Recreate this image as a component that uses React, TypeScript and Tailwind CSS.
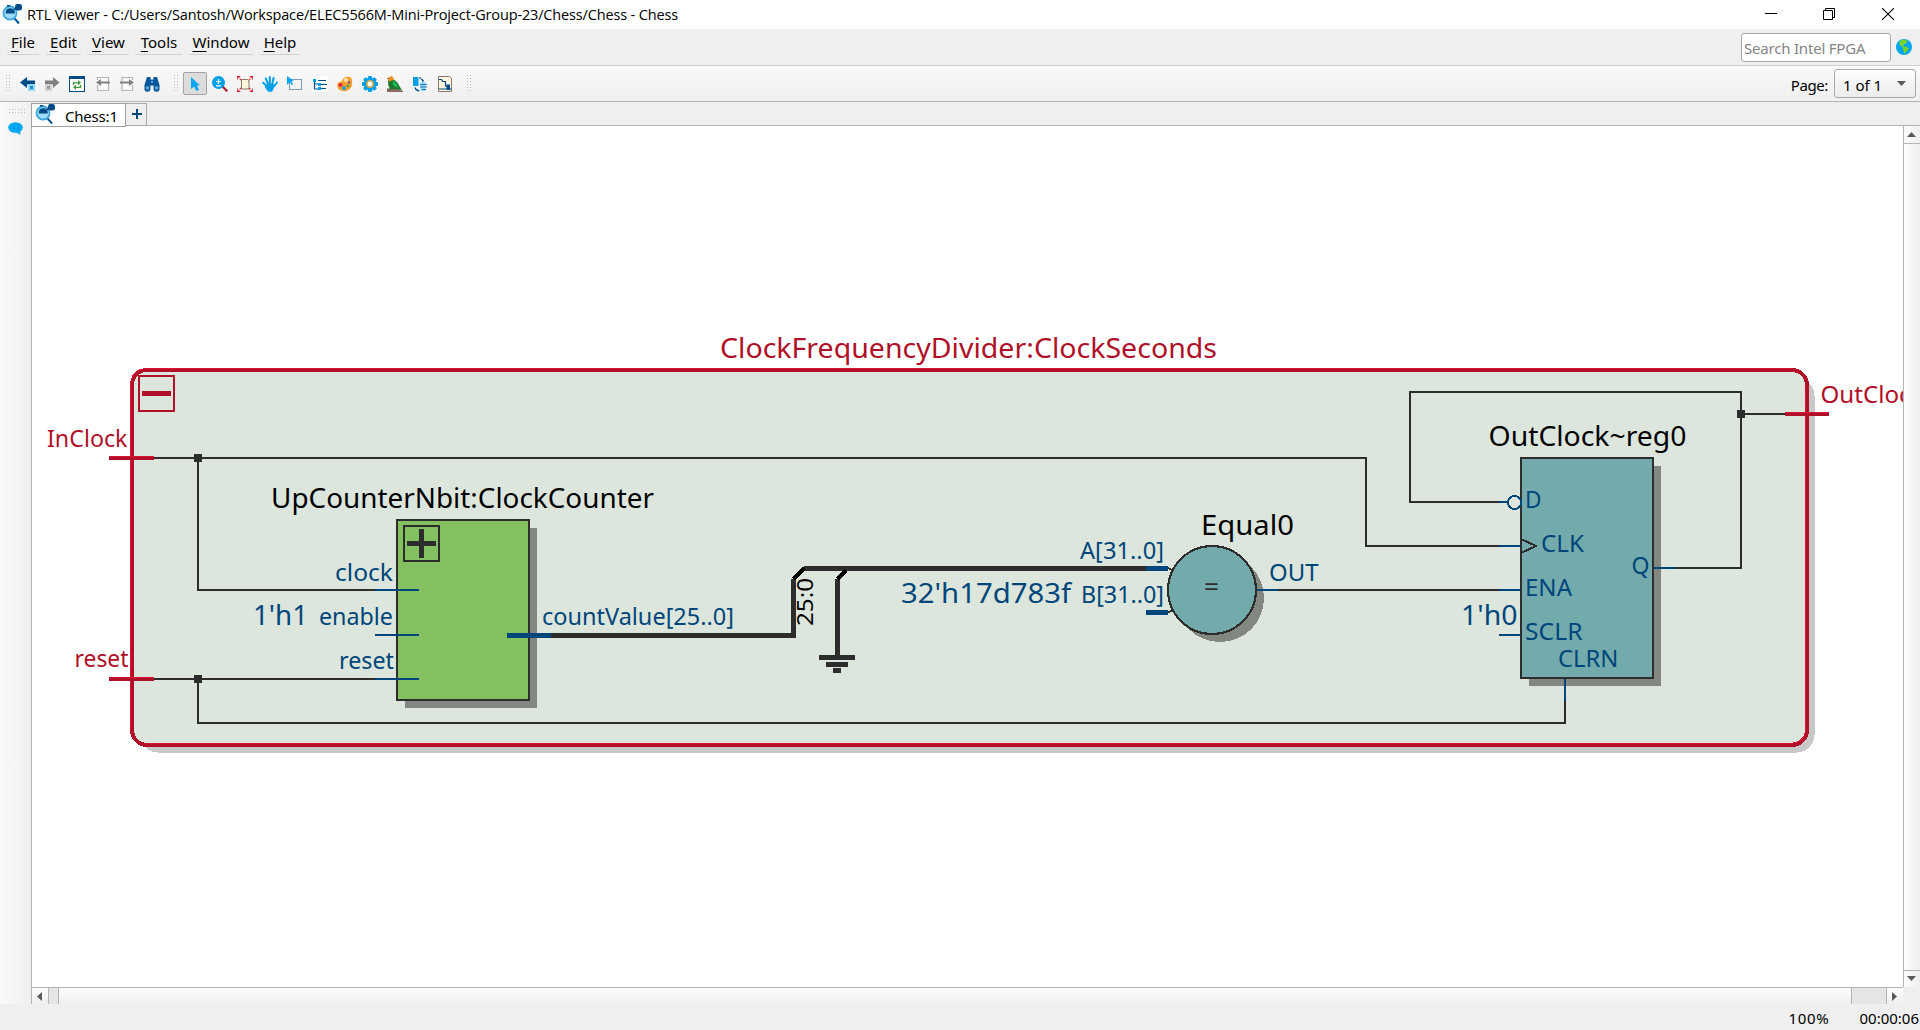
import React from "react";

type IconProps = { children: React.ReactNode; size?: number };

const Svg = ({ children, size = 16 }: IconProps) => (
  <svg width={size} height={size} viewBox={`0 0 ${size} ${size}`} className="shrink-0">
    {children}
  </svg>
);

const AppIcon = () => (
  <Svg size={20}>
    <path d="M12.5 14.5 17 19.5" stroke="#00539b" strokeWidth="2" />
    <circle cx="8" cy="9" r="6.6" fill="#9bdcf9" stroke="#3aa5dc" strokeWidth="1.7" />
    <path d="M3.8 9.5V7.5Q4.5 4.2 8.2 4.2T12.7 7.5V9.5Z" fill="#004a86" />
    <path d="M5 1h3.2v1.4H5z" fill="#004a86" />
    <path d="M11.5 5.5 15 4" stroke="#004a86" strokeWidth="1.6" />
    <rect x="13" y="0" width="7" height="6.6" rx="2.4" fill="#004a86" />
  </Svg>
);

const Handle = () => (
  <svg width="5" height="17" viewBox="0 0 5 17" className="shrink-0">
    {[0, 3, 6, 9, 12, 15].map((y) => (
      <g key={y} fill="#b9b9b9">
        <rect x="0" y={y} width="1" height="1" />
        <rect x="3" y={y} width="1" height="1" />
      </g>
    ))}
  </svg>
);

const BackIcon = () => (
  <Svg>
    <path d="M0 6.5 7 1v3.5h8v4H7V12Z" fill="#004a86" />
    <rect x="8" y="8" width="7" height="7" fill="#8ed8f8" />
    <rect x="10" y="10" width="3" height="3" fill="#2588c5" />
  </Svg>
);

const ForwardIcon = () => (
  <Svg>
    <path d="M15.5 6.5 9 1v3.5H1v4h8V12Z" fill="#7f7f7f" />
    <rect x="1" y="8" width="7" height="7" fill="#d2d2d2" />
    <rect x="3" y="10" width="3" height="3" fill="#999" />
  </Svg>
);

const RefreshIcon = () => (
  <Svg>
    <rect x=".5" y=".5" width="15" height="15" fill="#fff" stroke="#004a86" />
    <rect width="16" height="3" fill="#004a86" />
    <path d="M4.500 9V6.800H10" fill="none" stroke="#3f9a3a" strokeWidth="1.300" />
    <path d="M9 4.300v5l3-2.500ZM7 8.800v5L4 11.300Z" fill="#3f9a3a" />
    <path d="M11.500 9V11.300H6" fill="none" stroke="#3f9a3a" strokeWidth="1.300" />
  </Svg>
);

const PagePrevIcon = () => (
  <Svg>
    <path d="M2.500 4V1.500H13.500V14.500H2.500V9" fill="#fafafa" stroke="#b5b5b5" strokeWidth="1.200" />
    <path d="M1 6.500 6 3v2.500h9v2H6V10Z" fill="#808080" />
  </Svg>
);

const PageNextIcon = () => (
  <Svg>
    <path d="M13.500 4V1.500H3V14.500H13.500V9" fill="#fafafa" stroke="#b5b5b5" strokeWidth="1.200" />
    <path d="M15 6.500 10 3v2.500H1v2h9V10Z" fill="#808080" />
  </Svg>
);

const BinocularsIcon = () => (
  <Svg>
    <path d="M3 1h3.500v2.500h3V1H13l2.500 8v3.500a3 3 0 0 1-6 .5V9.500h-3V13a3 3 0 0 1-6-.5V9Z" fill="#00559b" />
    <circle cx="3.500" cy="11.800" r="1.900" fill="#5d9fd0" />
    <circle cx="12.500" cy="11.800" r="1.900" fill="#5d9fd0" />
    <rect x="7" y="5" width="2" height="2" fill="#5d9fd0" />
  </Svg>
);

const CursorIcon = () => (
  <Svg>
    <path d="M4 1v12l3-2.500L9.500 15l2.500-1.200L9.800 9.500H13Z" fill="#00a6f4" />
  </Svg>
);

const ZoomIcon = () => (
  <Svg>
    <path d="M10.500 10.500 15.300 15.300" stroke="#b01c24" strokeWidth="2.200" />
    <circle cx="6.500" cy="6.500" r="6.500" fill="#009fe8" />
    <path d="M4 5.500h5M6.500 3v5M4 9.800h5" stroke="#fff" strokeWidth="1.200" />
  </Svg>
);

const FitIcon = () => (
  <Svg>
    <path d="M4.500 3.500h6l1.500 1.500v8H4.500Z" fill="#fff6dd" stroke="#8d766d" />
    <path
      d="M0 0l4 4M0 4V.5H4M16 0l-4 4M16 4V.5H12M0 16l4-4M0 12v3.500H4M16 16l-4-4M16 12v3.500H12"
      stroke="#e5202b"
      strokeWidth="1.100"
      strokeDasharray="3 .7"
      fill="none"
    />
  </Svg>
);

const HandIcon = () => (
  <Svg>
    <path
      d="M1.200 6.800 5.500 11M3.800 2.500 6.500 9M7.800 1V8M11.600 2 10 9M15 6.500 11.500 11"
      stroke="#009fe8"
      strokeWidth="2"
      strokeLinecap="round"
    />
    <path d="M4.500 8h7.500l-.5 5-1.500 2.700H6.200L3 11.500Z" fill="#009fe8" />
  </Svg>
);

const SelectAreaIcon = () => (
  <Svg>
    <rect x="2.500" y="3.500" width="12" height="10" fill="none" stroke="#004a86" strokeWidth="1.100" strokeDasharray="1 1" />
    <path d="M0 0 7 5H4.500L6 8.200 4.500 9 3 6 0 9Z" fill="#00a6f4" />
  </Svg>
);

const TreeIcon = () => (
  <Svg>
    <rect width="16" height="16" fill="#fff" />
    <path d="M2.500 3v10h5M2.500 8h5M6 4.500h8M9 8.500h6M9 12.500h5" fill="none" stroke="#004a86" strokeWidth="1.200" />
    <path d="M1 3h3v3H1zM6 7h3v3H6zM6 11h3v3H6z" fill="#009fe8" />
  </Svg>
);

const PaletteIcon = () => (
  <Svg>
    <path
      d="M10.500.8a3.500 3.500 0 0 1 4.500 3.500c.3 3 .5 5.500-2 8.500-2.500 2.500-6 3-8.500 2C2 14 0 12 .3 9.500.7 6 3 6 4.800 5 6 4 6 .8 10.500.8Z"
      fill="#f9a12a"
    />
    <circle cx="9" cy="4" r="2" fill="#ffe3b0" />
    <circle cx="3.500" cy="9" r="2" fill="#e01a4f" />
    <circle cx="7" cy="12" r="1.900" fill="#009fe8" />
    <circle cx="11" cy="10" r="1.300" fill="#45a33a" />
    <circle cx="12" cy="6.500" r="1.200" fill="#8449ae" />
  </Svg>
);

const GearIcon = () => (
  <Svg>
    <g fill="#009fe8">
      {[0, 45, 90, 135].map((a) => (
        <rect key={a} x="6" y="0" width="4" height="16" rx="1" transform={`rotate(${a} 8 8)`} />
      ))}
      <circle cx="8" cy="8" r="6.200" />
    </g>
    <circle cx="8" cy="8" r="3.200" fill="#fff" stroke="#d6a945" strokeWidth="1.500" />
  </Svg>
);

const BirdIcon = () => (
  <Svg>
    <path d="M0 12.500 6 12l10 3v1H0Z" fill="#8a6a60" />
    <path d="M1 4 6 3l4 3 3 5 2 3.500-6-1.500-6 .5Q.5 9 1 4Z" fill="#1d7a30" />
    <path d="M6 5q3 1 4 4l1 3-5-3Z" fill="#12c452" />
    <path d="M1 3.500Q2 0 4.500.300 7 1 6.500 4L2 5.500Z" fill="#f5921e" />
    <path d="M1 1.500 0 3h2Z" fill="#5d4037" />
  </Svg>
);

const SwapIcon = () => (
  <Svg>
    <rect x="1" y="1" width="5.500" height="9" fill="#009fe8" />
    <path d="M8.500 6h5v9h-5z" fill="#8ed8f8" />
    <path d="M7.500 1.500 9 2.500M9.500 3l2 2.500M3 11.500 4 13.500l3 1.500" stroke="#004a86" strokeWidth="1.400" fill="none" />
    <path d="M8 8.500h7M8 11h7M10 13.500h4" stroke="#2474b2" strokeWidth="1" />
  </Svg>
);

const NetlistIcon = () => (
  <Svg>
    <path d="M1.500 .5h11l2 2v13h-13Z" fill="#fff6dd" stroke="#8d766d" />
    <path d="M2 3.500h2.500l1 2h3V10h3M1.500 13h13" fill="none" stroke="#004a86" strokeWidth="1.200" />
    <rect x="9.500" y="8.500" width="3.500" height="5.500" fill="#004a86" />
  </Svg>
);

const GlobeIcon = () => (
  <Svg>
    <circle cx="8" cy="8" r="8" fill="#00a6f4" />
    <path d="M3.500 2 8 .3l3.500 1.500-1 2.500L7 6l2 1.500L7 8 3.500 6Z" fill="#77d42a" />
    <path d="M6.500 8 10 7.500l3 2-2.500 3L8.500 15 7.500 11.500Z" fill="#77d42a" />
  </Svg>
);

const Menu = ({ label, width }: { label: string; width: string }) => (
  <div className={`${width} h-[25px] border-b border-[#d2d2d2] text-center leading-[24px]`}>
    <span className="underline underline-offset-[3px]">{label[0]}</span>
    {label.slice(1)}
  </div>
);

const Cell = ({ width, children }: { width: string; children: React.ReactNode }) => (
  <div className={`${width} flex h-6 shrink-0 items-center justify-center`}>{children}</div>
);

const Arrow = ({ d }: { d: string }) => (
  <svg width="9" height="9" viewBox="0 0 9 9">
    <path d={d} fill="#5a5a5a" />
  </svg>
);

const BLUE = "#00467a";
const RED = "#b01028";
const INK = "#2d2d2d";

type LabelProps = { x: number; y: number; w: number; size?: number; color?: string; text: string };

/* x and w describe the visible extent of the label; y is its baseline. */
const Label = ({ x, y, w, size = 23.5, color = BLUE, text }: LabelProps) => (
  <text x={x - 1} y={y} fontSize={size} fill={color} textLength={w + 2} lengthAdjust="spacingAndGlyphs">
    {text}
  </text>
);

const Wire = ({ d, color = INK, w = 2 }: { d: string; color?: string; w?: number }) => (
  <path d={d} fill="none" stroke={color} strokeWidth={w} />
);

const Port = ({ x1, x2, y }: { x1: number; x2: number; y: number }) => (
  <g>
    <rect x={x1} y={y} width={x2 - x1} height="4" fill={RED} />
    <rect x={x1} y={y} width={x2 - x1} height="1" fill="#dc1432" />
  </g>
);

const Schematic = () => (
  <svg
    width="1871"
    height="861"
    viewBox="32 126 1871 861"
    shapeRendering="crispEdges"
    className="block font-['Noto_Sans',sans-serif]"
  >
    {/* hierarchy block */}
    <rect x="140" y="378" width="1674.500" height="374.500" rx="18" fill="#c8c8c8" />
    <rect x="132" y="370" width="1675" height="375" rx="15" fill="#dce6dd" stroke={RED} strokeWidth="4" />
    <path d="M130.500 730V386Q131 369 147 368.500H1792" fill="none" stroke="#dc1432" strokeWidth="1" />
    <path d="M146 743.500H1790Q1805 742 1805.500 730V386" fill="none" stroke="#dc1432" strokeWidth="1" />
    <Label x={721} y={358} w={495} size={28} color={RED} text="ClockFrequencyDivider:ClockSeconds" />
    <rect x="139" y="376" width="35" height="35" fill="none" stroke={RED} strokeWidth="2" />
    <rect x="142" y="391" width="29" height="5" fill={RED} />

    {/* scalar nets */}
    <Wire d="M154 458H1366V546H1499" />
    <Wire d="M198 458V590H375" />
    <Wire d="M154 679H375" />
    <Wire d="M198 679V723H1565V701" />
    <Wire d="M1278 590H1499" />
    <Wire d="M1675 568H1741V392H1410V502H1499" />
    <Wire d="M1741 414H1785" />
    <rect x="194" y="454" width="8" height="8" fill={INK} />
    <rect x="194" y="675" width="8" height="8" fill={INK} />
    <rect x="1737" y="410" width="8" height="8" fill={INK} />

    <Port x1={109} x2={154} y={456} />
    <Port x1={109} x2={154} y={677} />
    <Port x1={1785} x2={1829} y={412} />
    <Label x={48} y={447} w={78.500} color={RED} text="InClock" />
    <Label x={75.500} y={667} w={52} color={RED} text="reset" />
    <Label x={1821.500} y={403} w={101} color={RED} text="OutClock" />

    {/* counter */}
    <rect x="405" y="528" width="132" height="180" fill="#828880" />
    <rect x="397" y="520" width="132" height="180" fill="#82c060" stroke={INK} strokeWidth="2" />
    <rect x="404" y="526" width="35" height="35" fill="none" stroke={INK} strokeWidth="2" />
    <rect x="407" y="541" width="29" height="5" fill={INK} />
    <rect x="419" y="529" width="5" height="29" fill={INK} />
    <Wire d="M375 590H419M375 635H419M375 679H419" color={BLUE} />
    <Label x={272} y={508} w={381} size={28} color="#000" text="UpCounterNbit:ClockCounter" />
    <Label x={336} y={581} w={56} text="clock" />
    <Label x={320} y={625} w={72} text="enable" />
    <Label x={340} y={669} w={53} text="reset" />
    <Label x={254} y={625} w={53} size={28} text="1'h1" />

    {/* bus */}
    <Wire d="M551 635.500H793.500V579" w={5} />
    <Wire d="M804 568.500H1146" w={5} />
    <Wire d="M837.500 579V655" w={5} />
    <Wire d="M793.500 579 804.500 568M837.500 579 846 570.500" color="#000" w={4.500} />
    <rect x="507" y="633" width="44" height="5" fill={BLUE} />
    <path d="M819 655h36v5h-36zM826 662h22v5h-22zM833 668h8v5h-8z" fill={INK} />
    <Label x={543} y={625} w={190} text="countValue[25..0]" />
    <text
      transform="translate(813 626) rotate(-90)"
      fontSize="22.500"
      textLength="48"
      lengthAdjust="spacingAndGlyphs"
    >
      25:0
    </text>

    {/* comparator */}
    <rect x="1146" y="566" width="22" height="5" fill={BLUE} />
    <rect x="1146" y="610" width="22" height="5" fill={BLUE} />
    <Wire d="M1168 568 1173 570.500M1168 612.500 1173 610" w={1.500} />
    <circle cx="1220" cy="598" r="44" fill="#828880" />
    <circle cx="1212" cy="590" r="44" fill="#73abad" stroke={INK} strokeWidth="2" />
    <Wire d="M1257 590H1278" color={BLUE} />
    <Label x={1205} y={595} w={13} size={23.500} color={INK} text="=" />
    <Label x={1202} y={535} w={91} size={28} color="#000" text="Equal0" />
    <Label x={1081} y={559} w={82} text="A[31..0]" />
    <Label x={1082} y={603} w={81} text="B[31..0]" />
    <Label x={902} y={603} w={168} size={28} text="32'h17d783f" />
    <Label x={1270} y={581} w={47.500} text="OUT" />

    {/* register */}
    <rect x="1529" y="466" width="132" height="220" fill="#828880" />
    <rect x="1521" y="458" width="132" height="220" fill="#73abad" stroke={INK} strokeWidth="2" />
    <Wire d="M1499 502H1507M1499 546H1520M1499 590H1520M1499 635H1520M1654 568H1675M1565 679V701" color={BLUE} />
    <circle cx="1514.500" cy="502.500" r="6.500" fill="#dce6dd" stroke={BLUE} strokeWidth="2" />
    <Wire d="M1522 539.500 1536 546 1522 552.500" />
    <Label x={1489.500} y={446} w={196} size={28} color="#000" text="OutClock~reg0" />
    <Label x={1526} y={508} w={14.500} text="D" />
    <Label x={1542} y={552} w={41} text="CLK" />
    <Label x={1526} y={596} w={45} text="ENA" />
    <Label x={1526} y={640} w={55.500} text="SCLR" />
    <Label x={1559} y={667} w={58.500} text="CLRN" />
    <Label x={1632.500} y={574} w={16} text="Q" />
    <Label x={1462} y={625} w={54.500} size={28} text="1'h0" />
  </svg>
);

export default function App() {
  return (
    <div className="flex h-[1030px] w-[1920px] flex-col overflow-hidden bg-[#efefef] font-['Noto_Sans',sans-serif] text-[15px] text-black">
      <header className="flex h-[29px] shrink-0 items-start justify-between bg-white">
        <div className="flex items-start pl-0.5 pt-1">
          <AppIcon />
          <span className="ml-[5px] font-['Open_Sans',sans-serif] text-[14.5px] leading-[21px] tracking-[-0.15px] whitespace-nowrap">
            RTL Viewer - C:/Users/Santosh/Workspace/ELEC5566M-Mini-Project-Group-23/Chess/Chess - Chess
          </span>
        </div>
        <div className="flex pt-2 pr-[26px]">
          <svg width="12" height="12" className="mr-[46px]">
            <path d="M0 5.500H12" stroke="#000" />
          </svg>
          <svg width="12" height="12" fill="none" stroke="#000" className="mr-[47px]">
            <path d="M.5 2.500h9v9h-9zM2.500 2.500v-2h9v9h-2" />
          </svg>
          <svg width="12" height="12" stroke="#000" strokeWidth="1.100">
            <path d="M0 0 12 12M12 0 0 12" />
          </svg>
        </div>
      </header>

      <nav className="flex h-9 shrink-0 justify-between">
        <div className="flex gap-[7px] pl-[7px] pt-[1px] text-[15px]">
          <Menu label="File" width="w-8" />
          <Menu label="Edit" width="w-[35px]" />
          <Menu label="View" width="w-[41px]" />
          <Menu label="Tools" width="w-[46px]" />
          <Menu label="Window" width="w-16" />
          <Menu label="Help" width="w-10" />
        </div>
        <div className="flex items-start pt-1 pr-2">
          <div className="mr-[5px] h-[29px] w-[150px] rounded-[3px] border border-[#a8a8a8] bg-white pl-[2px] text-[15px] leading-[28px] tracking-[-0.2px] text-[#858585]">
            Search Intel FPGA
          </div>
          <div className="pt-1.5">
            <GlobeIcon />
          </div>
        </div>
      </nav>

      <div className="flex h-[37px] shrink-0 items-center justify-between border-t border-b border-t-[#d0d0d0] border-b-[#b4b4b4] bg-linear-to-b from-[#fafafa] to-[#efefef]">
        <div className="flex items-center">
          <Cell width="w-4"><Handle /></Cell>
          <Cell width="w-6"><BackIcon /></Cell>
          <Cell width="w-6"><ForwardIcon /></Cell>
          <Cell width="w-[26px]"><RefreshIcon /></Cell>
          <Cell width="w-[25px]"><PagePrevIcon /></Cell>
          <Cell width="w-[23px]"><PageNextIcon /></Cell>
          <Cell width="w-7"><BinocularsIcon /></Cell>
          <Cell width="w-[17px]"><span className="pl-1"><Handle /></span></Cell>
          <div className="flex h-[23px] w-6 items-center justify-center rounded-[2px] border border-[#a3a3a3] bg-[#dcdcdc]">
            <CursorIcon />
          </div>
          <Cell width="w-[25px]"><ZoomIcon /></Cell>
          <Cell width="w-[25px]"><FitIcon /></Cell>
          <Cell width="w-[25px]"><HandIcon /></Cell>
          <Cell width="w-[25px]"><SelectAreaIcon /></Cell>
          <Cell width="w-[25px]"><TreeIcon /></Cell>
          <Cell width="w-[25px]"><PaletteIcon /></Cell>
          <Cell width="w-[25px]"><GearIcon /></Cell>
          <Cell width="w-[25px]"><BirdIcon /></Cell>
          <Cell width="w-[25px]"><SwapIcon /></Cell>
          <Cell width="w-[25px]"><NetlistIcon /></Cell>
          <Cell width="w-6"><Handle /></Cell>
        </div>
        <div className="flex items-center pr-1">
          <span className="mr-[6px] pt-[3px] text-[15px] tracking-[-0.4px]">Page:</span>
          <div className="flex h-[29px] w-[82px] items-center justify-between rounded-[3px] border border-[#a8a8a8] bg-linear-to-b from-[#fdfdfd] to-[#ececec] pr-[9px] pl-[8px] text-[15px]">
            <span className="pt-[3px]">1 of 1</span>
            <Arrow d="M0 2H9L4.500 7Z" />
          </div>
        </div>
      </div>

      <div className="flex h-[902px] shrink-0">
        <aside className="flex w-[31px] shrink-0 flex-col items-center bg-linear-to-r from-[#fafafa] to-[#efefef] pt-[7px]">
          <svg width="17" height="5" className="ml-[3px]">
            {[0, 3, 6, 9, 12, 15].map((x) => (
              <g key={x} fill="#b9b9b9">
                <rect x={x} y="0" width="1" height="1" />
                <rect x={x} y="3" width="1" height="1" />
              </g>
            ))}
          </svg>
          <svg width="16" height="14" className="mt-2 ml-px">
            <ellipse cx="7.500" cy="5.500" rx="7.300" ry="5.200" fill="#00a6f4" />
            <path d="M6 9 12.500 13 12 8Z" fill="#00a6f4" />
          </svg>
        </aside>

        <div className="flex w-[1889px] flex-col">
          <div className="flex h-6 shrink-0 items-start">
            <div className="z-10 mt-px flex h-[24px] w-[95px] shrink-0 items-start border border-[#a0a0a0] bg-white pl-[3px]">
              <AppIcon />
              <span className="ml-[10px] text-[15px] leading-[25px] tracking-[-0.2px]">Chess:1</span>
            </div>
            <div className="mt-px flex h-[23px] w-[21px] shrink-0 items-center justify-center border border-l-0 border-[#a8a8a8] pl-px pb-px">
              <svg width="10" height="10">
                <path d="M0 5H10M5 0V10" stroke="#00467a" strokeWidth="2" />
              </svg>
            </div>
            <div className="h-6 grow border-b border-[#b4b4b4]" />
          </div>

          <div className="flex h-[861px] shrink-0 border-l border-[#b4b4b4]">
            <main className="w-[1871px] shrink-0 overflow-hidden bg-white">
              <Schematic />
            </main>
            <div className="flex w-[17px] shrink-0 flex-col border-l border-[#b4b4b4] bg-linear-to-r from-[#fdfdfd] to-[#efefef]">
              <div className="flex h-[18px] items-center justify-center border-b border-[#b4b4b4] pr-px">
                <Arrow d="M0 7H9L4.500 2Z" />
              </div>
              <div className="grow" />
              <div className="flex h-[17px] items-center justify-center border-t border-[#b4b4b4] pr-px pb-px">
                <Arrow d="M0 2H9L4.500 7Z" />
              </div>
            </div>
          </div>

          <div className="flex h-[17px] w-[1872px] shrink-0 items-stretch border-t border-l border-[#b4b4b4] bg-linear-to-b from-[#fdfdfd] to-[#efefef]">
            <div className="flex w-4 items-center justify-center pr-px">
              <Arrow d="M7 0V9L2 4.500Z" />
            </div>
            <div className="w-[11px] border-x border-[#b4b4b4] bg-[#e5e5e5]" />
            <div className="grow" />
            <div className="w-9 border-x border-[#b4b4b4] bg-[#e5e5e5]" />
            <div className="flex w-4 items-center justify-center pr-px">
              <Arrow d="M2 0V9L7 4.500Z" />
            </div>
          </div>
        </div>
      </div>

      <footer className="flex h-[26px] shrink-0 items-center justify-end gap-[30px] pt-[2px] pr-px text-[15px] leading-[24px]">
        <span className="tracking-[0.7px]">100%</span>
        <span>00:00:06</span>
      </footer>
    </div>
  );
}
